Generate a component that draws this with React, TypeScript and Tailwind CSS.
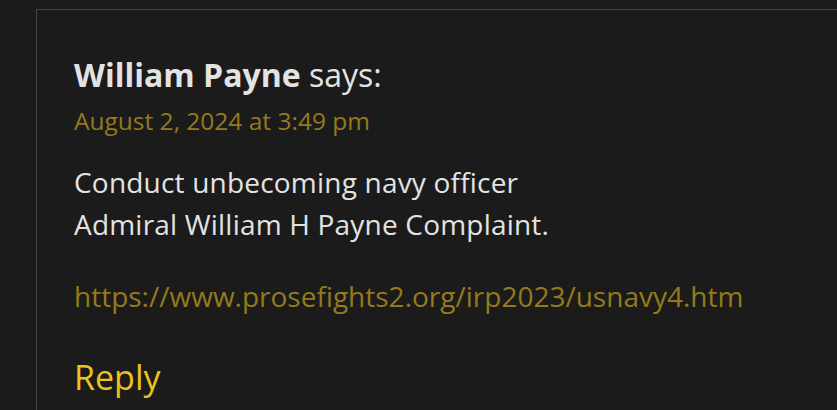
import React from "react";

const font = { fontFamily: '"Open Sans", "Liberation Sans", sans-serif' };

export default function App() {
    return (
        <div className="h-[410px] overflow-hidden bg-[#1b1b1b] pt-[9px] pl-[36px] flex flex-col" style={font}>
            <div className="flex-1 border-t border-l border-[#464646] pl-[37px] pt-[45px]">
                {/* Author */}
                <div className="text-[32px] leading-[40px] text-[#e3e3e3]">
                    <span className="font-bold">William Payne</span>{" "}
                    <span>says:</span>
                </div>

                {/* Date */}
                <div className="mt-[9px] text-[24.5px] leading-[34px] text-[#947a1b]">
                    August 2, 2024 at 3:49 pm
                </div>

                {/* Body */}
                <div className="mt-[23px] text-[28px] leading-[42px] text-[#e3e3e3]">
                    <p className="tracking-[0.2px]">
                        Conduct unbecoming navy officer
                        <br />
                        Admiral William H Payne Complaint.
                    </p>
                    <p className="mt-[30px] text-[#947a1b]">
                        https://www.prosefights2.org/irp2023/usnavy4.htm
                    </p>
                </div>

                {/* Reply */}
                <div className="mt-[38px] text-[34px] leading-[44px] text-[#ecc11c]">Reply</div>
            </div>
        </div>
    );
}
